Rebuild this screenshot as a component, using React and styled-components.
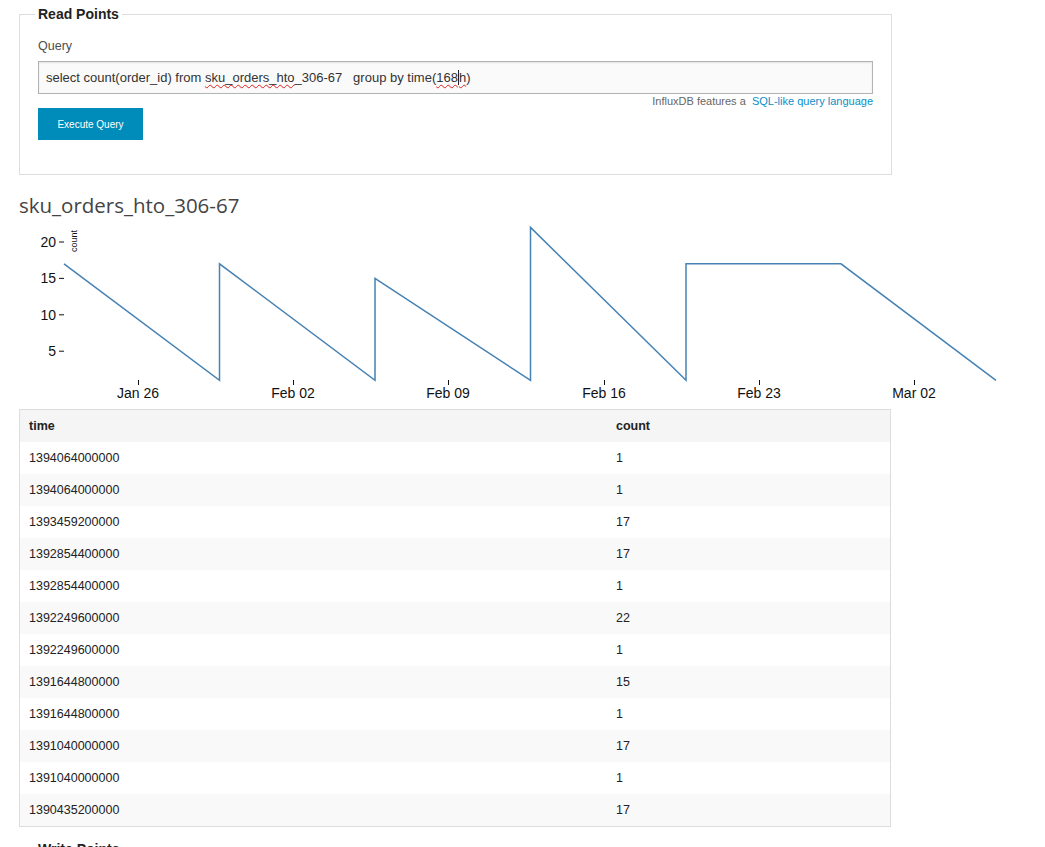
import React from "react";
import styled, { createGlobalStyle } from "styled-components";

const Global = createGlobalStyle`
  html, body { margin: 0; padding: 0; background: #fff; }
  body { font-family: "Liberation Sans", Arial, sans-serif; color: #222; overflow: hidden; }
`;

const Page = styled.div`
  padding: 0 0 0 19px;
  width: 1026px;
`;

const Fieldset = styled.fieldset`
  width: 872px;
  box-sizing: border-box;
  border: 1px solid #ddd;
  margin: ${(p) => p.$mt || 0}px 0 0 0;
  padding: 16px 18px 34px 18px;
  min-height: ${(p) => p.$h || 0}px;
`;

const Legend = styled.legend`
  font-weight: bold;
  font-size: 14px;
  color: #222;
  padding: 0 3px;
  margin-left: -3px;
  line-height: 17px;
`;

const Label = styled.label`
  display: block;
  font-size: 12.5px;
  color: #4d4d4d;
  line-height: 14px;
  margin: 0 0 8px 0;
`;

const QueryInput = styled.div`
  box-sizing: border-box;
  height: 33px;
  width: 835px;
  border: 1px solid #b3b3b3;
  background: #fafafa;
  box-shadow: inset 0 1px 2px rgba(0, 0, 0, 0.1);
  font-size: 13px;
  color: #333;
  display: flex;
  align-items: center;
  padding-left: 7px;
  white-space: pre;
`;

const Squiggle = styled.span`
  text-decoration: underline wavy #e02020;
  text-decoration-thickness: 1px;
  text-underline-offset: 2px;
`;

const Caret = styled.span`
  display: inline-block;
  width: 1px;
  height: 15px;
  background: #222;
  vertical-align: -3px;
`;

const Help = styled.div`
  width: 835px;
  text-align: right;
  font-size: 11px;
  color: #666;
  line-height: 13px;
  margin-top: 1px;
  white-space: pre;
`;

const Link = styled.a`
  color: #0a8fc8;
  text-decoration: none;
`;

const Button = styled.button`
  display: block;
  margin-top: 0;
  width: 105px;
  height: 32px;
  border: none;
  background: #008cba;
  color: #fff;
  font-family: "Liberation Sans", Arial, sans-serif;
  font-size: 10px;
  padding: 0;
`;

const Title = styled.h2`
  margin: 18px 0 0 0;
  font-family: "Open Sans", sans-serif;
  font-weight: 400;
  font-size: 20.5px;
  line-height: 24px;
  color: #444;
`;

const ChartSvg = styled.svg`
  display: block;
  margin-top: 4px;
`;

const Table = styled.table`
  width: 872px;
  border-collapse: collapse;
  border: 1px solid #ddd;
  margin-top: 4px;
  font-size: 12.5px;
`;

const Th = styled.th`
  text-align: left;
  font-weight: bold;
  color: #222;
  background: #f5f5f5;
  height: 32px;
  padding: 0 9px;
  width: ${(p) => (p.$w ? p.$w + "px" : "auto")};
`;

const Tr = styled.tr`
  background: ${(p) => (p.$alt ? "#f9f9f9" : "#fff")};
`;

const Td = styled.td`
  height: 32px;
  padding: 0 9px;
  color: #222;
`;

const rows = [
  ["1394064000000", "1"],
  ["1394064000000", "1"],
  ["1393459200000", "17"],
  ["1392854400000", "17"],
  ["1392854400000", "1"],
  ["1392249600000", "22"],
  ["1392249600000", "1"],
  ["1391644800000", "15"],
  ["1391644800000", "1"],
  ["1391040000000", "17"],
  ["1391040000000", "1"],
  ["1390435200000", "17"],
];

const yOf = (v) => 241 + (20 - v) * 7.28;
const pts = [
  [64, 17], [219.5, 1], [219.5, 17], [375, 1], [375, 15], [530.5, 1], [530.5, 22],
  [686, 1], [686, 17], [841, 17], [996, 1],
];
const xTicks = [
  [138, "Jan 26"], [293, "Feb 02"], [448, "Feb 09"], [604, "Feb 16"], [759, "Feb 23"], [914, "Mar 02"],
];
const yTicks = [20, 15, 10, 5];

function Chart() {
  const d = pts.map(([x, v], i) => `${i ? "L" : "M"}${x},${yOf(v).toFixed(1)}`).join(" ");
  return (
    <ChartSvg width="1026" height="184" viewBox="19 220 1026 184">
      <g fontFamily="Liberation Sans, Arial, sans-serif" fontSize="14" fill="#111">
        {yTicks.map((v) => (
          <g key={v}>
            <text x="56" y={yOf(v) + 5} textAnchor="end">{v}</text>
            <line x1="59" x2="64" y1={yOf(v)} y2={yOf(v)} stroke="#111" strokeWidth="1" />
          </g>
        ))}
        {xTicks.map(([x, l]) => (
          <g key={l}>
            <line x1={x + 0.5} x2={x + 0.5} y1="379" y2="384" stroke="#111" strokeWidth="1" />
            <text x={x} y="397" textAnchor="middle">{l}</text>
          </g>
        ))}
        <text
          x="0"
          y="0"
          fontSize="9"
          textAnchor="middle"
          transform="translate(77,240) rotate(-90)"
        >
          count
        </text>
      </g>
      <path d={d} fill="none" stroke="#4682b4" strokeWidth="1.5" />
    </ChartSvg>
  );
}

export default function App() {
  return (
    <Page>
      <Global />
      <Fieldset $mt={6}>
        <Legend>Read Points</Legend>
        <Label>Query</Label>
        <QueryInput>
          select count(order_id) from <Squiggle>sku_orders_hto</Squiggle>_306-67   group by time(
          <Squiggle>168</Squiggle>
          <Caret />
          <Squiggle>h</Squiggle>)
        </QueryInput>
        <Help>
          InfluxDB features a  <Link href="#">SQL-like query language</Link>
        </Help>
        <Button>Execute Query</Button>
      </Fieldset>
      <Title>sku_orders_hto_306-67</Title>
      <Chart />
      <Table>
        <thead>
          <tr>
            <Th $w={569}>time</Th>
            <Th>count</Th>
          </tr>
        </thead>
        <tbody>
          {rows.map(([t, c], i) => (
            <Tr key={i} $alt={i % 2 === 1}>
              <Td>{t}</Td>
              <Td>{c}</Td>
            </Tr>
          ))}
        </tbody>
      </Table>
      <Fieldset $mt={14} $h={100}>
        <Legend>Write Points</Legend>
      </Fieldset>
    </Page>
  );
}
